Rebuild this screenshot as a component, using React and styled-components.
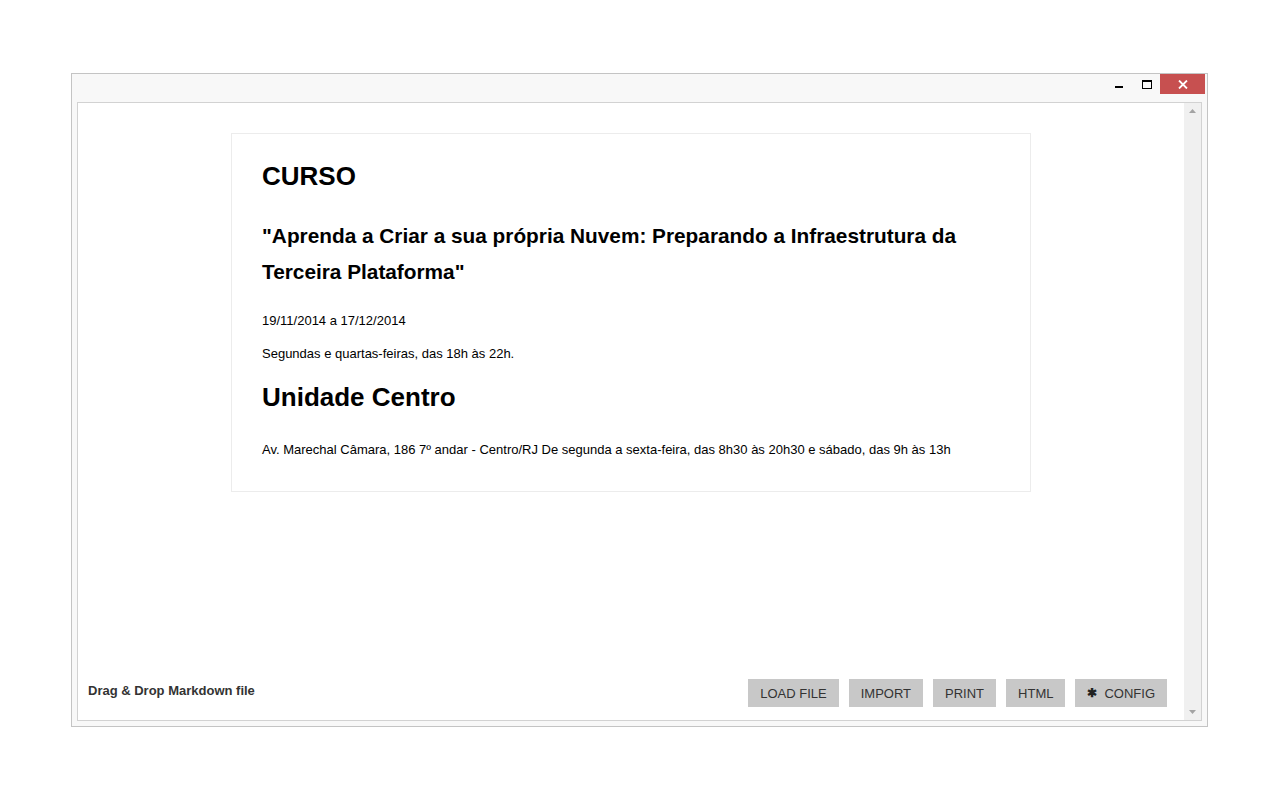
import React from 'react';
import styled, { createGlobalStyle } from 'styled-components';

const GlobalStyle = createGlobalStyle`
  html, body {
    margin: 0;
    padding: 0;
    background: #ffffff;
    font-family: Arial, "Liberation Sans", sans-serif;
  }
`;

const Page = styled.div`
  width: 1280px;
  height: 800px;
  padding: 73px 0 0 71px;
  box-sizing: border-box;
`;

const Window = styled.div`
  width: 1137px;
  height: 654px;
  box-sizing: border-box;
  border: 1px solid #c4c4c4;
  background: #f8f8f8;
  display: flex;
  flex-direction: column;
  padding: 0 5px 5px 5px;
`;

const TitleBar = styled.div`
  height: 28px;
  display: flex;
  justify-content: flex-end;
  align-items: flex-start;
  margin-right: -3px;
`;

const ControlButton = styled.div`
  width: ${props => props.wide ? '45px' : '27px'};
  height: 20px;
  display: flex;
  align-items: center;
  justify-content: center;
  background: ${props => props.danger ? '#c75050' : 'transparent'};
`;

const Frame = styled.div`
  flex: 1;
  display: flex;
  border: 1px solid #d2d2d2;
  background: #ffffff;
  min-height: 0;
`;

const Main = styled.div`
  flex: 1;
  display: flex;
  flex-direction: column;
`;

const Scroller = styled.div`
  flex: 1;
  display: flex;
  justify-content: center;
  align-items: flex-start;
  padding-top: 30px;
`;

const Card = styled.div`
  width: 800px;
  box-sizing: border-box;
  border: 1px solid #ececec;
  padding: 27px 30px 32px 30px;
  color: #000;
`;

const Heading = styled.h1`
  font-size: 26px;
  font-weight: bold;
  margin: 0;
  line-height: 30px;
  margin-top: ${props => props.top || 0}px;
`;

const SubHeading = styled.h2`
  font-size: 20.8px;
  font-weight: bold;
  margin: 27px 0 0 0;
  line-height: 36px;
`;

const Para = styled.p`
  font-size: 13px;
  line-height: 18px;
  margin: ${props => props.top || 0}px 0 0 0;
`;

const Footer = styled.div`
  height: 55px;
  display: flex;
  align-items: flex-start;
  justify-content: space-between;
  padding: 14px 17px 0 10px;
  box-sizing: border-box;
`;

const DropHint = styled.div`
  font-size: 13px;
  font-weight: bold;
  color: #333;
  padding-top: 4px;
`;

const Buttons = styled.div`
  display: flex;
  gap: 10px;
`;

const Button = styled.button`
  height: 28px;
  border: none;
  background: #c8c8c8;
  color: #333;
  font-family: Arial, "Liberation Sans", sans-serif;
  font-size: 13px;
  padding: 0 12px;
  display: flex;
  align-items: center;
  gap: 7px;
  cursor: pointer;
`;

const Star = styled.span`
  font-weight: bold;
  font-size: 12px;
  color: #222;
`;

const ScrollTrack = styled.div`
  width: 17px;
  background: #f0f0f0;
  display: flex;
  flex-direction: column;
  justify-content: space-between;
  align-items: center;
  padding: 6px 0;
  box-sizing: border-box;
`;

const Arrow = ({ down }) => (
  <svg width="7" height="4" viewBox="0 0 7 4">
    <polygon points={down ? '0,0 7,0 3.5,4' : '0,4 7,4 3.5,0'} fill="#a3a3a3" />
  </svg>
);

export default function App() {
  return (
    <>
      <GlobalStyle />
      <Page>
        <Window>
          <TitleBar>
            <ControlButton>
              <svg width="9" height="9" viewBox="0 0 9 9">
                <rect x="0" y="6" width="8" height="2" fill="#000" />
              </svg>
            </ControlButton>
            <ControlButton>
              <svg width="10" height="9" viewBox="0 0 10 9">
                <rect x="0.5" y="0.5" width="9" height="8" fill="none" stroke="#000" />
                <rect x="0" y="0" width="10" height="2" fill="#000" />
              </svg>
            </ControlButton>
            <ControlButton wide danger>
              <svg width="10" height="9" viewBox="0 0 10 9">
                <path d="M1 0.5 L9 8.5 M9 0.5 L1 8.5" stroke="#fff" strokeWidth="1.8" />
              </svg>
            </ControlButton>
          </TitleBar>
          <Frame>
            <Main>
              <Scroller>
                <Card>
                  <Heading>CURSO</Heading>
                  <SubHeading>
                    "Aprenda a Criar a sua própria Nuvem: Preparando a Infraestrutura da
                    Terceira Plataforma"
                  </SubHeading>
                  <Para top={22}>19/11/2014 a 17/12/2014</Para>
                  <Para top={15}>Segundas e quartas-feiras, das 18h às 22h.</Para>
                  <Heading top={19}>Unidade Centro</Heading>
                  <Para top={29}>
                    Av. Marechal Câmara, 186 7º andar - Centro/RJ De segunda a sexta-feira, das 8h30 às 20h30 e sábado, das 9h às 13h
                  </Para>
                </Card>
              </Scroller>
              <Footer>
                <DropHint>Drag &amp; Drop Markdown file</DropHint>
                <Buttons>
                  <Button>LOAD FILE</Button>
                  <Button>IMPORT</Button>
                  <Button>PRINT</Button>
                  <Button>HTML</Button>
                  <Button>
                    <Star>✱</Star>CONFIG
                  </Button>
                </Buttons>
              </Footer>
            </Main>
            <ScrollTrack>
              <Arrow />
              <Arrow down />
            </ScrollTrack>
          </Frame>
        </Window>
      </Page>
    </>
  );
}
